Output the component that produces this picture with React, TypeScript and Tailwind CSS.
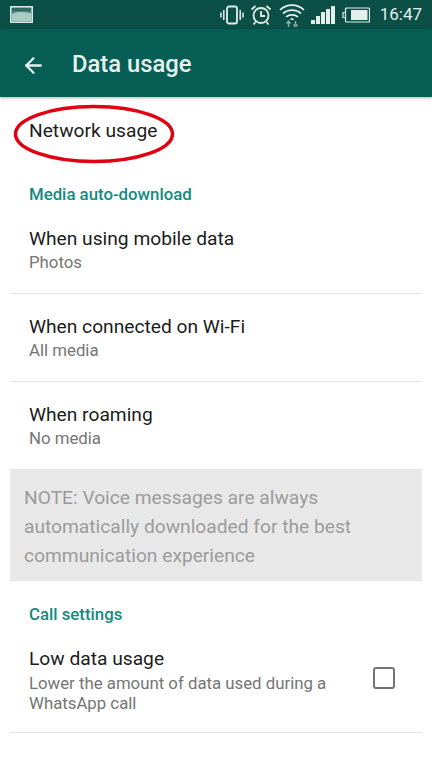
import { ArrowLeft } from 'lucide-react';

function StatusIcons() {
  return (
    <div className="flex items-center h-[29px] text-[#e3efec]">
      {/* vibrate */}
      <svg width="24" height="20" viewBox="0 0 24 20" fill="none" stroke="currentColor" className="ml-[4px]">
        <rect x="7" y="1.5" width="10" height="17" rx="2" strokeWidth="1.8" />
        <path d="M3.8 5v10M1 7.5v5M20.2 5v10M23 7.5v5" strokeWidth="1.5" />
      </svg>
      {/* alarm */}
      <svg width="22" height="22" viewBox="0 0 22 22" fill="none" stroke="currentColor" className="ml-[6px]" strokeWidth="1.8">
        <circle cx="11" cy="11.5" r="7.5" />
        <path d="M11 7v5h4M1.5 5.5l4-3.5M20.5 5.5l-4-3.5M5.5 18l-2 2.5M16.5 18l2 2.5" />
      </svg>
      {/* wifi */}
      <svg width="26" height="25" viewBox="0 0 26 25" fill="none" stroke="currentColor" className="ml-[7px]" strokeWidth="1.7">
        <path d="M1 8c7-6.500 17-6.500 24 0M4 11.500c5-4.500 13-4.500 18 0M7 15c3-2.800 9-2.800 12 0" />
        <path d="M13 15.500l2 2.500h-4z" fill="currentColor" stroke="none" />
        <path d="M9.500 25v-4M7.500 21.500l2-2.500 2 2.500M16.500 19v4M14.500 22.500l2 2.500 2-2.500" stroke="#8fb0aa" strokeWidth="1.4" />
      </svg>
      {/* signal */}
      <div className="flex items-end gap-[1.5px] h-[18px] ml-[6px]">
        <div className="w-[3.5px] h-[4px] bg-current" />
        <div className="w-[3.5px] h-[8px] bg-current" />
        <div className="w-[3.5px] h-[12px] bg-current" />
        <div className="w-[3.5px] h-[15px] bg-current" />
        <div className="w-[3.5px] h-[18px] bg-current" />
      </div>
      {/* battery */}
      <svg width="28" height="16" viewBox="0 0 28 16" className="ml-[7px]">
        <path d="M3 5.500H1v5h2" fill="none" stroke="currentColor" strokeWidth="1.2" />
        <rect x="3.500" y="1" width="24" height="14" rx="1" fill="none" stroke="currentColor" strokeWidth="1.2" />
        <rect x="9" y="3" width="16.500" height="10" fill="currentColor" />
      </svg>
      <span className="ml-[10px] text-[17px] leading-none">16:47</span>
    </div>
  );
}

function SectionLabel({ children }: { children: React.ReactNode }) {
  return <div className="px-[29px] text-[16.800px] leading-[20px] font-medium text-[#128c7e]">{children}</div>;
}

function Row({ title, sub, className }: { title: string; sub: string; className: string }) {
  return (
    <div className={`mx-[10px] px-[19px] ${className}`}>
      <div className="text-[19.200px] leading-[24px] text-[#1c1c1c]">{title}</div>
      <div className="-mt-px text-[16.800px] leading-[24px] text-[#757575]">{sub}</div>
    </div>
  );
}

export default function App() {
  return (
    <div className="w-[432px] h-[768px] overflow-hidden bg-white font-['Roboto',sans-serif]">
      <div className="h-[29px] bg-[#0b4f47] flex items-center justify-between pl-[10px] pr-[10px]">
        <svg width="23" height="17" viewBox="0 0 23 17">
          <rect x="0.750" y="0.750" width="21.500" height="15.500" fill="#4f8379" stroke="#d5ebe6" strokeWidth="1.500" />
          <path d="M2 8c5-3 10-2 19-1v8H2z" fill="#a9cbc3" />
          <path d="M2 2h19v3H2z" fill="#2f6b60" />
        </svg>
        <StatusIcons />
      </div>
      <div className="h-[68px] bg-[#075e54] flex items-center pl-[21px] pt-[4px] shadow-[0_1px_3px_rgba(0,0,0,0.3)] relative">
        <ArrowLeft size={25} strokeWidth={2.200} className="text-[#e6f2ef]" />
        <span className="ml-[26px] text-[23.800px] font-medium text-[#e6f2ef]">Data usage</span>
      </div>

      <div className="relative h-[66px] px-[29px] pt-[2px] flex items-center text-[19.200px] text-[#1c1c1c]">
        Network usage
        <svg width="164" height="62" viewBox="0 0 164 62" fill="none" className="absolute left-[12px] top-[5px]">
          <ellipse cx="82" cy="32" rx="78.500" ry="27.500" stroke="#e1000f" strokeWidth="3.500" />
        </svg>
      </div>

      <div className="mt-[21px]">
        <SectionLabel>Media auto-download</SectionLabel>
      </div>
      <Row title="When using mobile data" sub="Photos" className="h-[90px] pt-[23px] border-b border-[#e4e4e4]" />
      <Row title="When connected on Wi-Fi" sub="All media" className="h-[88px] pt-[21px] border-b border-[#e4e4e4]" />
      <Row title="When roaming" sub="No media" className="h-[87px] pt-[21px]" />

      <div className="mx-[10px] h-[112px] bg-[#e8e8e8] px-[14px] pt-[14px] text-[19.200px] leading-[29px] text-[#9b9b9b]">
        NOTE: Voice messages are always automatically downloaded for the best communication experience
      </div>

      <div className="mt-[23px]">
        <SectionLabel>Call settings</SectionLabel>
      </div>
      <div className="mx-[10px] mt-[23px] pl-[19px] pr-[27px] h-[86px] border-b border-[#e4e4e4] flex items-start justify-between">
        <div className="w-[320px]">
          <div className="text-[19.200px] leading-[24px] text-[#1c1c1c]">Low data usage</div>
          <div className="mt-[2px] text-[16.800px] leading-[20px] text-[#757575]">Lower the amount of data used during a WhatsApp call</div>
        </div>
        <div className="mt-[20px] w-[22px] h-[22px] border-2 border-[#757575] rounded-[3px]" />
      </div>
    </div>
  );
}
